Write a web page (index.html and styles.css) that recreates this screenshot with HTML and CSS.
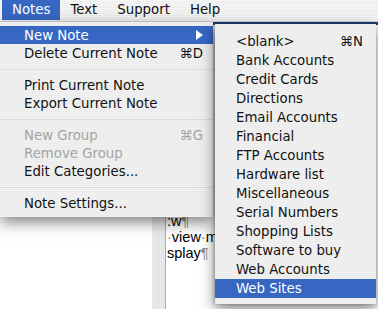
FILE: index.html
```html
<!DOCTYPE html>
<html lang="en">
<head>
  <meta charset="UTF-8" />
  <title>Notes menu</title>
  <link rel="stylesheet" href="styles.css">
</head>
<body>

  <div class="menubar">
    <span class="title active">Notes</span>
    <span class="title">Text</span>
    <span class="title">Support</span>
    <span class="title">Help</span>
  </div>

  <div class="window">
    <div class="sidebar"></div>
    <div class="divider"></div>
    <div class="doc">
      <div class="strip"></div>
      <p class="line">:w<span class="mark">¶</span></p>
      <p class="line"><span class="mark">·</span>view<span class="mark">·</span>more</p>
      <p class="line">splay<span class="mark">¶</span></p>
    </div>
  </div>

  <div class="menu main-menu">
    <div class="item selected">New Note <span class="arrow"></span></div>
    <div class="item">Delete Current Note <span class="key">⌘D</span></div>
    <div class="sep"></div>
    <div class="item">Print Current Note</div>
    <div class="item">Export Current Note</div>
    <div class="sep"></div>
    <div class="item disabled">New Group <span class="key">⌘G</span></div>
    <div class="item disabled">Remove Group</div>
    <div class="item">Edit Categories...</div>
    <div class="sep"></div>
    <div class="item">Note Settings...</div>
  </div>

  <div class="menu sub-menu">
    <div class="item">&lt;blank&gt; <span class="key">⌘N</span></div>
    <div class="item">Bank Accounts</div>
    <div class="item">Credit Cards</div>
    <div class="item">Directions</div>
    <div class="item">Email Accounts</div>
    <div class="item">Financial</div>
    <div class="item">FTP Accounts</div>
    <div class="item">Hardware list</div>
    <div class="item">Miscellaneous</div>
    <div class="item">Serial Numbers</div>
    <div class="item">Shopping Lists</div>
    <div class="item">Software to buy</div>
    <div class="item">Web Accounts</div>
    <div class="item selected">Web Sites</div>
  </div>

</body>
</html>
```

FILE: styles.css
```css
body {
  margin: 0;
  width: 378px;
  height: 309px;
  overflow: hidden;
  position: relative;
  background: #fff;
  font-family: 'DejaVu Sans', sans-serif;
  font-size: 13.3px;
  color: #111;
}
.menubar {
  height: 21px;
  display: flex;
  padding-left: 2px;
  background: repeating-linear-gradient(#f6f6f6 0 1px, #ececec 1px 2px);
  border-bottom: 1px solid #cfcfcf;
}
.title {
  padding: 0 10px;
  line-height: 20px;
  height: 20px;
}
.title.active {
  background: #3667c3;
  color: #fff;
}
.window {
  display: flex;
  height: 287px;
}
.sidebar {
  width: 152px;
  background: #fff;
}
.divider {
  width: 13px;
  background: repeating-linear-gradient(90deg, #ececec 0 1px, #e2e2e2 1px 2px);
  border-right: 1px solid #a8a8a8;
}
.doc {
  flex: 1;
  padding-left: 1px;
  font-family: 'Liberation Sans', sans-serif;
  font-size: 14.5px;
  color: #000;
}
.strip {
  height: 3px;
  margin-left: -1px;
  background: #20407c;
}
.line {
  margin: 0;
  line-height: 16px;
  white-space: nowrap;
}
.line:first-of-type {
  margin-top: 188px;
}
.mark {
  color: #888;
}
.menu {
  position: absolute;
  background: repeating-linear-gradient(#f1f1f1 0 1px, #ebebeb 1px 2px);
  box-shadow: 0 5px 14px rgba(0, 0, 0, 0.5);
}
.main-menu {
  left: 0;
  top: 22px;
  width: 213px;
  padding: 4px 0 5px;
}
.sub-menu {
  left: 215px;
  top: 24px;
  width: 161px;
  padding: 8px 0 6px;
  box-shadow: 0 5px 14px rgba(0, 0, 0, 0.5), -1px 0 3px rgba(0, 0, 0, 0.25);
}
.item {
  display: flex;
  align-items: center;
  justify-content: space-between;
  height: 18px;
  padding: 0 10px 0 24px;
  white-space: nowrap;
}
.sub-menu .item {
  height: 19px;
  padding: 0 13px 0 21px;
}
.item.selected {
  background: #3667c3;
  color: #fff;
}
.item.disabled {
  color: #a4a4a4;
}
.key {
  color: inherit;
}
.arrow {
  width: 0;
  height: 0;
  border-top: 5px solid transparent;
  border-bottom: 5px solid transparent;
  border-left: 7px solid #fff;
}
.sep {
  height: 14px;
  background: linear-gradient(#dadada, #dadada) center / 100% 1px no-repeat;
}
```
